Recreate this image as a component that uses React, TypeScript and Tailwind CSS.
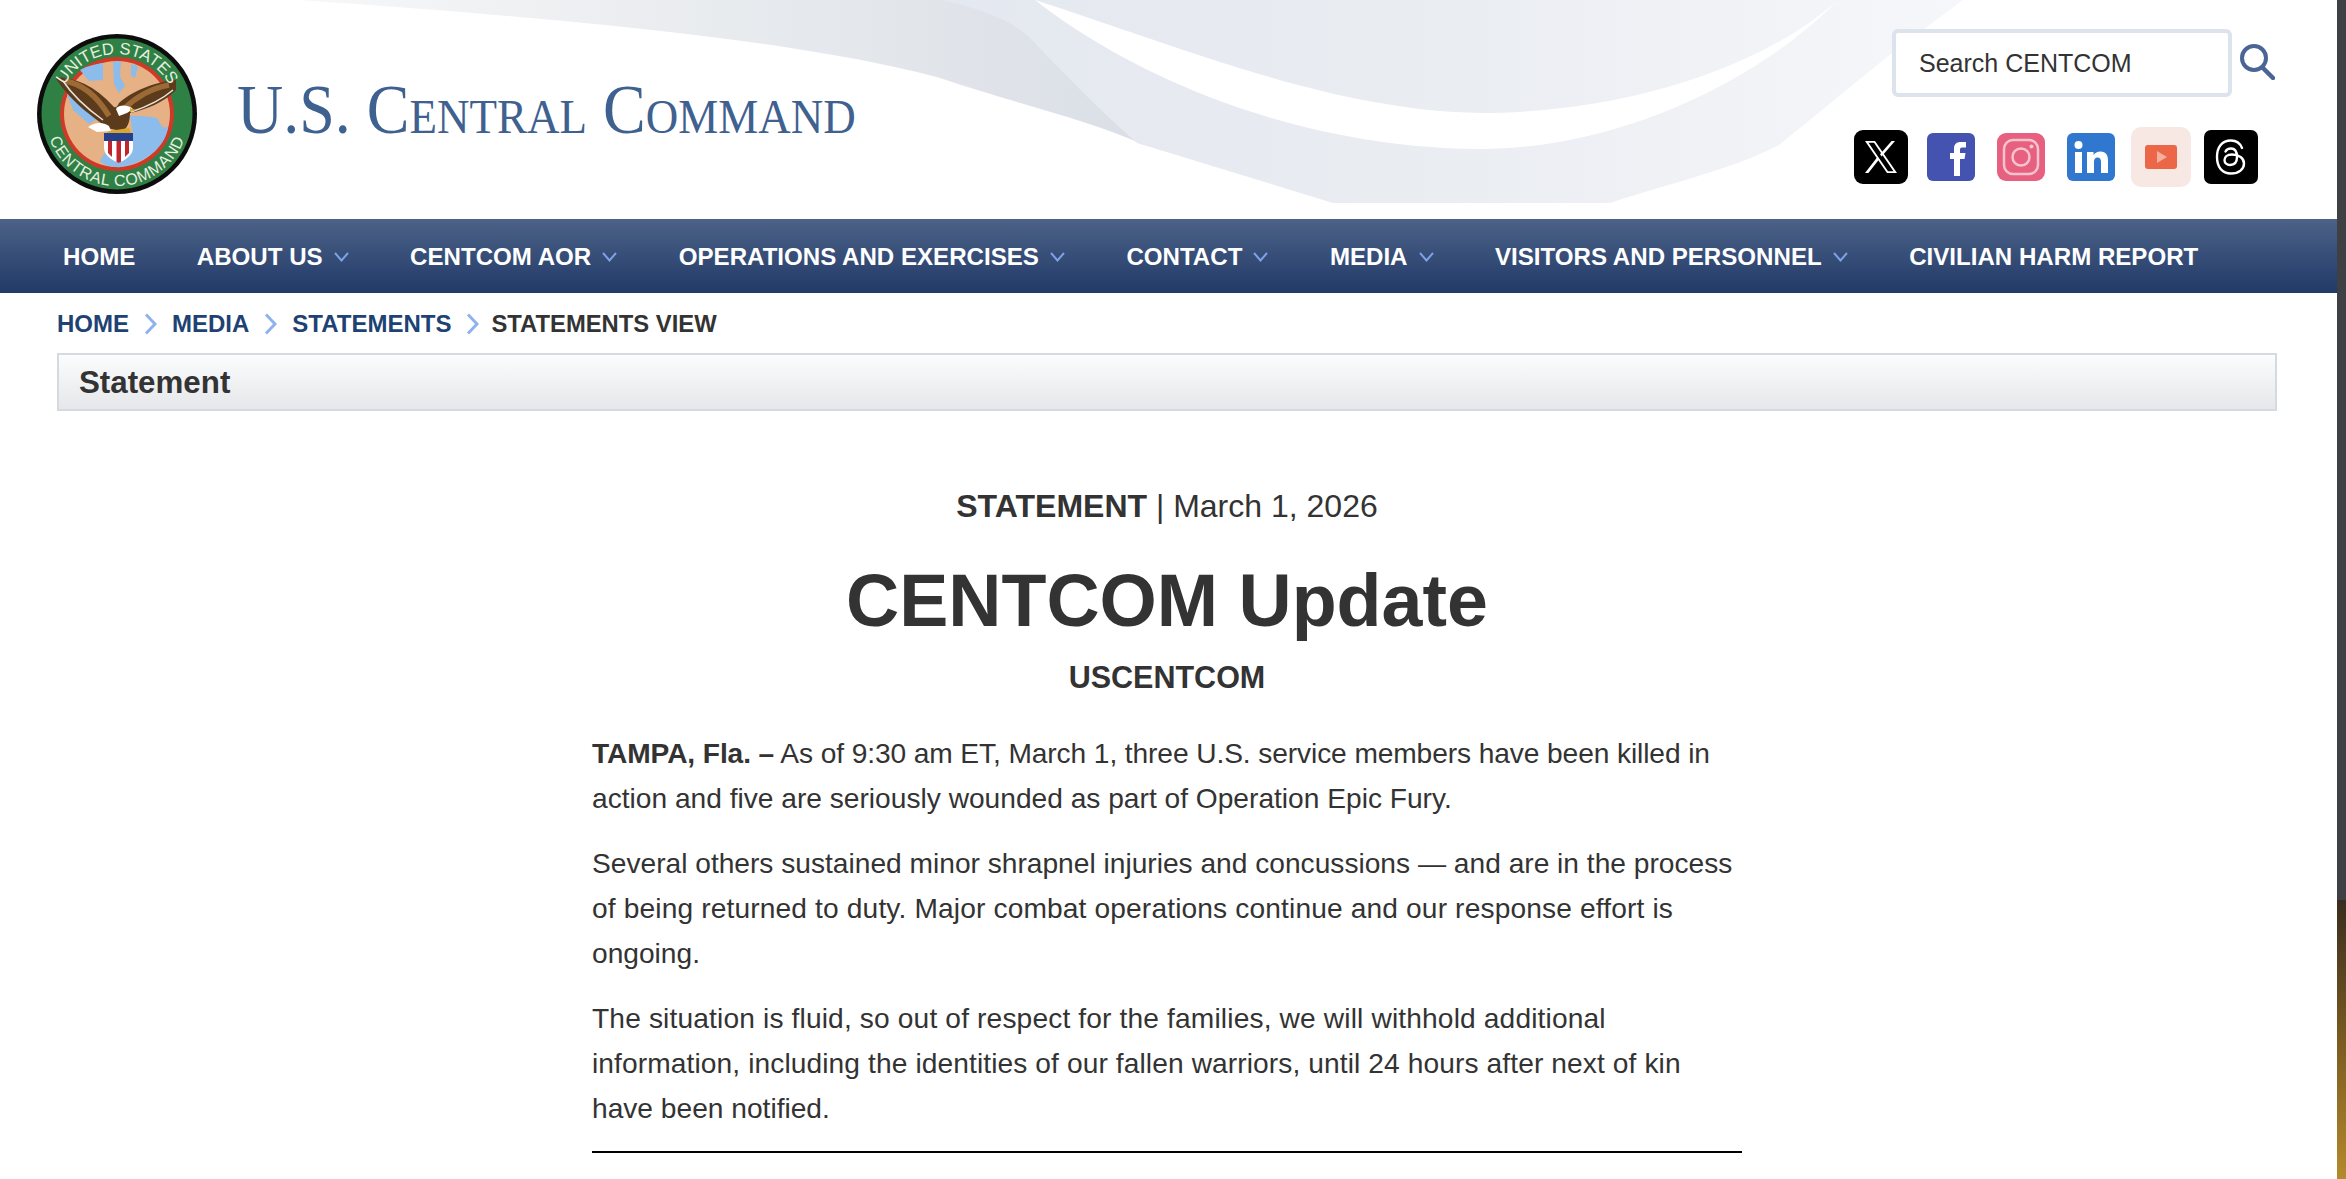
import React from "react";

function Wave() {
  return (
    <svg className="absolute left-0 top-0" width="2337" height="219" viewBox="0 0 2337 219">
      <defs>
        <linearGradient id="g1" x1="0" x2="1" y1="0" y2="0">
          <stop offset="0" stopColor="#f6f7f8" />
          <stop offset="0.6" stopColor="#e5e8ec" />
          <stop offset="1" stopColor="#d9dee6" />
        </linearGradient>
        <linearGradient id="g2" x1="0" x2="1" y1="0" y2="0">
          <stop offset="0" stopColor="#e4e8f0" />
          <stop offset="0.45" stopColor="#e9ecf1" />
          <stop offset="1" stopColor="#f6f7fa" />
        </linearGradient>
      </defs>
      <path d="M300 0 C 560 18 800 40 940 78 C 1020 105 1090 120 1144 145 L 1170 100 L 1060 0 Z" fill="url(#g1)" />
      <path d="M940 0 C 990 10 1015 24 1030 38 C 1065 75 1105 115 1137 143 L 1333 203 L 1610 203 C 1680 180 1730 170 1779 145 L 1887 57 L 1963 0 Z" fill="url(#g2)" />
      <path d="M1035 0 C 1150 90 1320 149 1480 149 C 1620 149 1760 80 1838 0 C 1760 70 1620 113 1480 113 C 1330 110 1190 50 1035 0 Z" fill="#ffffff" />
    </svg>
  );
}

function Logo() {
  return (
    <svg width="160" height="160" viewBox="0 0 160 160" className="shrink-0">
      <defs>
        <path id="topArc" d="M20 80 A 60 60 0 0 1 140 80" />
        <path id="botArc" d="M8 80 A 72 72 0 0 0 152 80" />
      </defs>
      <circle cx="80" cy="80" r="80" fill="#0d0d0d" />
      <circle cx="80" cy="80" r="75.500" fill="#2f8045" />
      <circle cx="80" cy="80" r="57" fill="#cf3a28" />
      <circle cx="80" cy="80" r="53" fill="#e6b184" />
      <path d="M43 36 C 50 32 58 30 66 29 L 66 46 L 52 47 Z M 76 28 L 84 27 L 83 42 L 88 52 L 82 59 L 77 50 Z M 94 30 L 101 32 L 98 44 L 94 42 Z M 30 60 L 44 62 L 60 85 L 52 90 L 36 76 Z" fill="#8cbcec" />
      <path d="M93 82 C 102 82 112 82 120 84 C 124 92 127 96 131 92 C 130 110 112 128 84 133 C 76 134 66 131 63 127 C 68 118 72 114 72 104 L 96 100 Z" fill="#8cbcec" />
      <path d="M18 43 C 38 43 58 52 76 72 C 78 75 81 72 82 69 C 94 58 116 48 139 46 L 139 56 C 128 68 108 76 93 79 C 93 88 90 96 84 97 L 70 94 C 62 86 36 72 18 43 Z" fill="#5c3a1c" />
      <path d="M28 47 C 46 50 60 62 72 82 M 132 51 C 114 54 98 64 88 74" stroke="#9c6a34" strokeWidth="5.500" fill="none" />
      <path d="M26 47 C 36 62 52 76 66 86 M 136 56 C 122 68 106 74 94 78" stroke="#e8e4da" strokeWidth="1.500" fill="none" />
      <path d="M79 75 C 82 70 92 71 96 75 L 90 79 L 82 82 Z" fill="#ffffff" />
      <path d="M93 74 L 99 76 L 93 78 Z" fill="#d9a72e" />
      <path d="M51 93 C 58 88 66 88 72 92 L 74 97 L 60 98 Z" fill="#ffffff" />
      <path d="M72 97 L 92 94 L 94 99 L 70 99 Z" fill="#d9a72e" />
      <path d="M67 99 L 96 99 L 96 114 C 96 122 86 127 81.500 129 C 77 127 67 122 67 114 Z" fill="#ffffff" />
      <path d="M71 107 H 75 V 123 L 71 119 Z M 79.500 107 H 84 V 128 L 81.500 129 L 79.500 128 Z M 88 107 H 92 V 119 L 88 123 Z" fill="#c0272d" />
      <rect x="67" y="99" width="29" height="8" fill="#27408b" />
      <text fontFamily="'Liberation Sans', sans-serif" fontSize="16.500" fill="#e8efe0">
        <textPath href="#topArc" startOffset="50%" textAnchor="middle">UNITED STATES</textPath>
      </text>
      <text fontFamily="'Liberation Sans', sans-serif" fontSize="16" letterSpacing="0.800" fill="#e8efe0">
        <textPath href="#botArc" startOffset="50%" textAnchor="middle">CENTRAL  COMMAND</textPath>
      </text>
    </svg>
  );
}

function Social() {
  return (
    <div className="flex items-center">
      <svg width="54" height="54" viewBox="0 0 54 54" className="mr-[19px]">
        <rect width="54" height="54" rx="9" fill="#000" />
        <path d="M11 11 L 33 43 H 43 L 21 11 Z M 14.500 12.800 H 20 L 39.500 41.200 H 34 Z" fill="#fff" fillRule="evenodd" />
        <path d="M41 11 H 37.600 L 26 24.300 L 27.600 26.600 Z M 25 29.400 L 23.400 27 L 11 43 H 14.400 Z" fill="#fff" />
      </svg>
      <svg width="48" height="48" viewBox="0 0 48 48" className="mr-[22px]">
        <rect width="48" height="48" rx="6" fill="#4553b0" />
        <path d="M27 43 V 26 H 23 V 20 H 27 V 15.500 C 27 11 30 9 33.500 9 H 39 V 14.500 H 35 C 33.500 14.500 33 15.500 33 16.500 V 20 H 38.500 L 37.500 26 H 33 V 43 Z" fill="#fff" />
      </svg>
      <svg width="48" height="48" viewBox="0 0 48 48" className="mr-[22px]">
        <rect width="48" height="48" rx="9" fill="#e7607f" />
        <rect x="7" y="7" width="34" height="34" rx="9" fill="none" stroke="#f6c3cf" strokeWidth="2.500" />
        <circle cx="24" cy="24" r="8.500" fill="none" stroke="#f6c3cf" strokeWidth="2.500" />
        <circle cx="34.500" cy="13.500" r="2" fill="#f6c3cf" />
      </svg>
      <svg width="48" height="48" viewBox="0 0 48 48" className="mr-[16px]">
        <rect width="48" height="48" rx="6" fill="#3077cf" />
        <rect x="8" y="19" width="7" height="21" fill="#fff" />
        <circle cx="11.500" cy="12" r="4" fill="#fff" />
        <path d="M20 19 H 26.500 V 22 C 28 20 30.500 18.500 33.500 18.500 C 39 18.500 41 22 41 27.500 V 40 H 34 V 29 C 34 26.500 33 24.500 30.500 24.500 C 28 24.500 27 26.500 27 29 V 40 H 20 Z" fill="#fff" />
      </svg>
      <svg width="60" height="60" viewBox="0 0 60 60" className="mr-[13px]">
        <rect width="60" height="60" rx="10" fill="#f7e8e4" />
        <rect x="14" y="18" width="32" height="24" rx="3" fill="#ec6747" />
        <path d="M26 24 L 36 30 L 26 36 Z" fill="#f3b09e" />
      </svg>
      <svg width="54" height="54" viewBox="0 0 54 54">
        <rect width="54" height="54" rx="7" fill="#000" />
        <path d="M38 18 C 36 13 32 10.500 27 10.500 C 18 10.500 13 17 13 27 C 13 37 18 43.500 27 43.500 C 35 43.500 40 39 40 33.500 C 40 28 35 24.500 28 24.500 C 23 24.500 20.500 27 20.500 30 C 20.500 33 23 35 26 35 C 30 35 33 32.500 33 27 C 33 21 30.500 18.500 27 18.500 C 24.500 18.500 22.500 19.500 21.500 21.500" fill="none" stroke="#fff" strokeWidth="2.400" strokeLinecap="round" />
      </svg>
    </div>
  );
}

const navItems: [string, boolean][] = [
  ["HOME", false],
  ["ABOUT US", true],
  ["CENTCOM AOR", true],
  ["OPERATIONS AND EXERCISES", true],
  ["CONTACT", true],
  ["MEDIA", true],
  ["VISITORS AND PERSONNEL", true],
  ["CIVILIAN HARM REPORT", false],
];

function Crumb({ label }: { label: string }) {
  return (
    <>
      <span className="text-[#1d4273]">{label}</span>
      <svg width="13" height="22" viewBox="0 0 13 22" className="mx-[15px]">
        <path d="M2 1.500 L 11 11 L 2 20.500" fill="none" stroke="#8fb2ee" strokeWidth="3" />
      </svg>
    </>
  );
}

export default function App() {
  return (
    <div className="flex h-[1179px] w-full overflow-hidden bg-white font-['Liberation_Sans',Arial,sans-serif] text-[#333333]">
      <div className="min-w-0 flex-1">
        <header className="relative flex h-[219px] justify-between overflow-hidden bg-white">
          <Wave />
          <div className="relative flex items-start pl-[37px] pt-[34px]">
            <Logo />
            <div className="ml-[40px] mt-[38px] origin-left scale-y-[1.08] font-['Liberation_Serif',serif] text-[64px] leading-[76px] text-[#3f6190] [font-variant:small-caps]">
              U.S. Central Command
            </div>
          </div>
          <div className="relative flex flex-col items-end pr-[62px] pt-[29px]">
            <div className="flex items-center">
              <div className="flex h-[68px] w-[340px] items-center rounded-md border-4 border-[#dde3ec] bg-white pl-[23px] pt-[2px] text-[25px] text-[#333333]">
                Search CENTCOM
              </div>
              <svg width="35" height="36" viewBox="0 0 35 36" className="ml-[8px] -mt-[2px]">
                <circle cx="14" cy="14" r="12" fill="none" stroke="#4a6595" strokeWidth="4" />
                <path d="M23 24 L 33 34" stroke="#4a6595" strokeWidth="4.500" strokeLinecap="round" />
              </svg>
            </div>
            <div className="mr-[17px] mt-[30px]">
              <Social />
            </div>
          </div>
        </header>

        <nav className="flex h-[74px] items-center bg-gradient-to-b from-[#4c6288] to-[#213a67] pl-[63px] pt-[2px] text-[24.100px] font-bold text-white">
          {navItems.map(([label, chev]) => (
            <div key={label} className="mr-[61.500px] flex items-center whitespace-nowrap">
              {label}
              {chev && (
                <svg width="15" height="10" viewBox="0 0 15 10" className="ml-[11px]">
                  <path d="M1 1 L 7.500 8.500 L 14 1" fill="none" stroke="#7ea3e6" strokeWidth="2" />
                </svg>
              )}
            </div>
          ))}
        </nav>

        <div className="flex h-[60px] items-center pl-[57px] pt-[2px] text-[24px] font-bold">
          <Crumb label="HOME" />
          <Crumb label="MEDIA" />
          <Crumb label="STATEMENTS" />
          <span className="-ml-[3px] text-[23.800px] text-[#333333]">STATEMENTS VIEW</span>
        </div>

        <div className="ml-[57px] mr-[60px] flex h-[58px] items-center border-2 border-[#d6dae0] bg-gradient-to-b from-[#fbfcfd] to-[#e5e7ea] pl-[20px] pt-[2px] text-[31.300px] font-bold text-[#333333]">
          Statement
        </div>

        <main className="flex flex-col items-center pr-[3px]">
          <div className="mt-[73px] text-[32px] leading-[44px]">
            <span className="font-bold">STATEMENT</span> | March 1, 2026
          </div>
          <h1 className="mt-[28px] text-[73.600px] font-bold leading-[90px]">CENTCOM Update</h1>
          <div className="mt-[11px] text-[30.500px] font-bold leading-[40px]">USCENTCOM</div>
          <article className="mt-[34px] w-[1150px] text-[28.150px] leading-[45px] text-[#333333]">
            <p>
              <span className="block tracking-[-0.1px]">
                <b>TAMPA, Fla. –</b> As of 9:30 am ET, March 1, three U.S. service members have been killed in
              </span>
              action and five are seriously wounded as part of Operation Epic Fury.
            </p>
            <p className="mt-[20px]">
              <span className="block">Several others sustained minor shrapnel injuries and concussions — and are in the process</span>
              <span className="block tracking-[0.14px]">of being returned to duty. Major combat operations continue and our response effort is</span>
              ongoing.
            </p>
            <p className="mt-[20px]">
              <span className="block tracking-[0.146px]">The situation is fluid, so out of respect for the families, we will withhold additional</span>
              <span className="block tracking-[0.1px]">information, including the identities of our fallen warriors, until 24 hours after next of kin</span>
              have been notified.
            </p>
            <div className="mt-[20px] h-[2px] bg-black" />
          </article>
        </main>
      </div>
      <div className="relative h-full w-[9px] shrink-0 bg-[#3f4044]">
        <div className="h-[900px] bg-[#3f4044]" />
        <div className="h-[279px] bg-gradient-to-b from-[#3a2d1e] via-[#7a5a20] via-[50%] to-[#b58a2c]" />
      </div>
    </div>
  );
}
